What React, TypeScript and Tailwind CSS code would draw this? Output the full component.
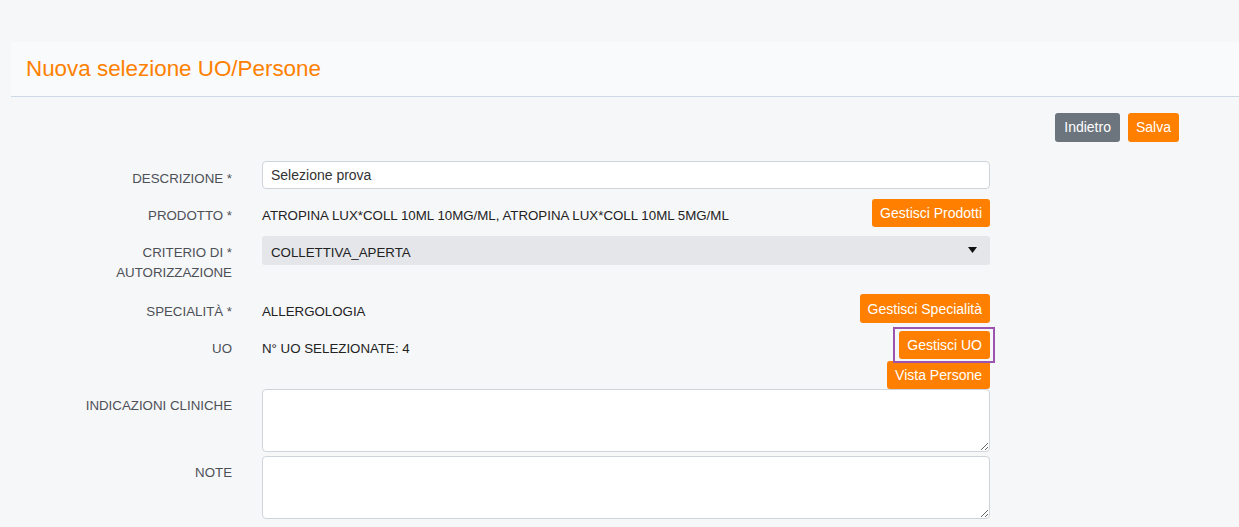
import React from "react";

const font = { fontFamily: '"Liberation Sans", Arial, sans-serif' };

function Label({ children, pt = "pt-[8px]" }: { children: React.ReactNode; pt?: string }) {
  return (
    <div className={`w-[221px] shrink-0 text-right text-[13.3px] leading-[20px] text-[#4d5057] uppercase ${pt}`}>
      {children}
    </div>
  );
}

function OrangeBtn({ children, extra = "" }: { children: React.ReactNode; extra?: string }) {
  return (
    <button
      className={`h-[28px] rounded-[3px] bg-[#ff8000] px-[8px] text-[14px] leading-[28px] text-white ${extra}`}
    >
      {children}
    </button>
  );
}

export default function App() {
  return (
    <div className="min-h-[527px] w-full bg-[#f6f7f9] pt-[42px] pl-[11px]" style={font}>
      <div className="h-[55px] border-b border-[#cdd9e5] bg-[#f9fafb] pl-[15px] flex items-center">
        <h1 className="text-[22.4px] leading-[28px] text-[#ff8000] pb-[1px]">Nuova selezione UO/Persone</h1>
      </div>

      <div className="flex justify-end gap-[8px] pr-[60px] mt-[16px]">
        <button className="h-[29px] rounded-[3px] bg-[#6c757d] px-[9px] text-[14px] text-white">Indietro</button>
        <button className="h-[29px] rounded-[3px] bg-[#ff8000] px-[8px] text-[14px] text-white">Salva</button>
      </div>

      <div className="mt-[19px] flex flex-col">
        {/* DESCRIZIONE */}
        <div className="flex gap-[30px]">
          <Label>DESCRIZIONE *</Label>
          <div className="w-[728px]">
            <input
              readOnly
              value="Selezione prova"
              className="h-[28px] w-full rounded-[4px] border border-[#ced4da] bg-white px-[8px] text-[14px] text-[#333] outline-none"
            />
          </div>
        </div>

        {/* PRODOTTO */}
        <div className="mt-[10px] flex gap-[30px]">
          <Label pt="pt-[7px]">PRODOTTO *</Label>
          <div className="flex w-[728px] items-start justify-between">
            <span className="pt-[7px] text-[13.3px] leading-[20px] text-[#222]">
              ATROPINA LUX*COLL 10ML 10MG/ML, ATROPINA LUX*COLL 10ML 5MG/ML
            </span>
            <OrangeBtn>Gestisci Prodotti</OrangeBtn>
          </div>
        </div>

        {/* CRITERIO */}
        <div className="mt-[9px] flex gap-[30px]">
          <Label pt="pt-[7px]">
            CRITERIO DI *<br />AUTORIZZAZIONE
          </Label>
          <div className="w-[728px]">
            <div className="relative h-[29px] rounded-[3px] bg-[#e4e6ea] pl-[9px] pt-[7px] text-[13.3px] leading-[20px] text-[#222]">
              <span>COLLETTIVA_APERTA</span>
              <svg className="absolute right-[13px] top-[11px]" width="9" height="6" viewBox="0 0 9 6">
                <path d="M0 0 L9 0 L4.5 6 Z" fill="#111" />
              </svg>
            </div>
          </div>
        </div>

        {/* SPECIALITA */}
        <div className="mt-[11px] flex gap-[30px]">
          <Label>SPECIALITÀ *</Label>
          <div className="flex w-[728px] items-start justify-between">
            <span className="pt-[8px] text-[13.3px] leading-[20px] text-[#222]">ALLERGOLOGIA</span>
            <OrangeBtn extra="h-[29px]">Gestisci Specialità</OrangeBtn>
          </div>
        </div>

        {/* UO */}
        <div className="mt-[8px] flex gap-[30px]">
          <Label>UO</Label>
          <div className="flex w-[728px] items-start justify-between">
            <span className="pt-[8px] text-[13.3px] leading-[20px] text-[#222]">N° UO SELEZIONATE: 4</span>
            <div className="flex flex-col items-end gap-[2px]">
              <div className="relative">
                <OrangeBtn extra="px-[6px]">Gestisci UO</OrangeBtn>
                <span className="pointer-events-none absolute -left-[6px] -right-[5px] -top-[4px] -bottom-[4px] border-2 border-[#9b55b0]" />
              </div>
              <OrangeBtn extra="h-[27px] leading-[27px]">Vista Persone</OrangeBtn>
            </div>
          </div>
        </div>

        {/* INDICAZIONI CLINICHE */}
        <div className="flex gap-[30px]">
          <Label pt="pt-[7px]">INDICAZIONI CLINICHE</Label>
          <div className="w-[728px]">
            <textarea className="block h-[63px] w-full rounded-[4px] border border-[#ced4da] bg-white outline-none" />
          </div>
        </div>

        {/* NOTE */}
        <div className="mt-[4px] flex gap-[30px]">
          <Label pt="pt-[7px]">NOTE</Label>
          <div className="w-[728px]">
            <textarea className="block h-[63px] w-full rounded-[4px] border border-[#ced4da] bg-white outline-none" />
          </div>
        </div>
      </div>
    </div>
  );
}
